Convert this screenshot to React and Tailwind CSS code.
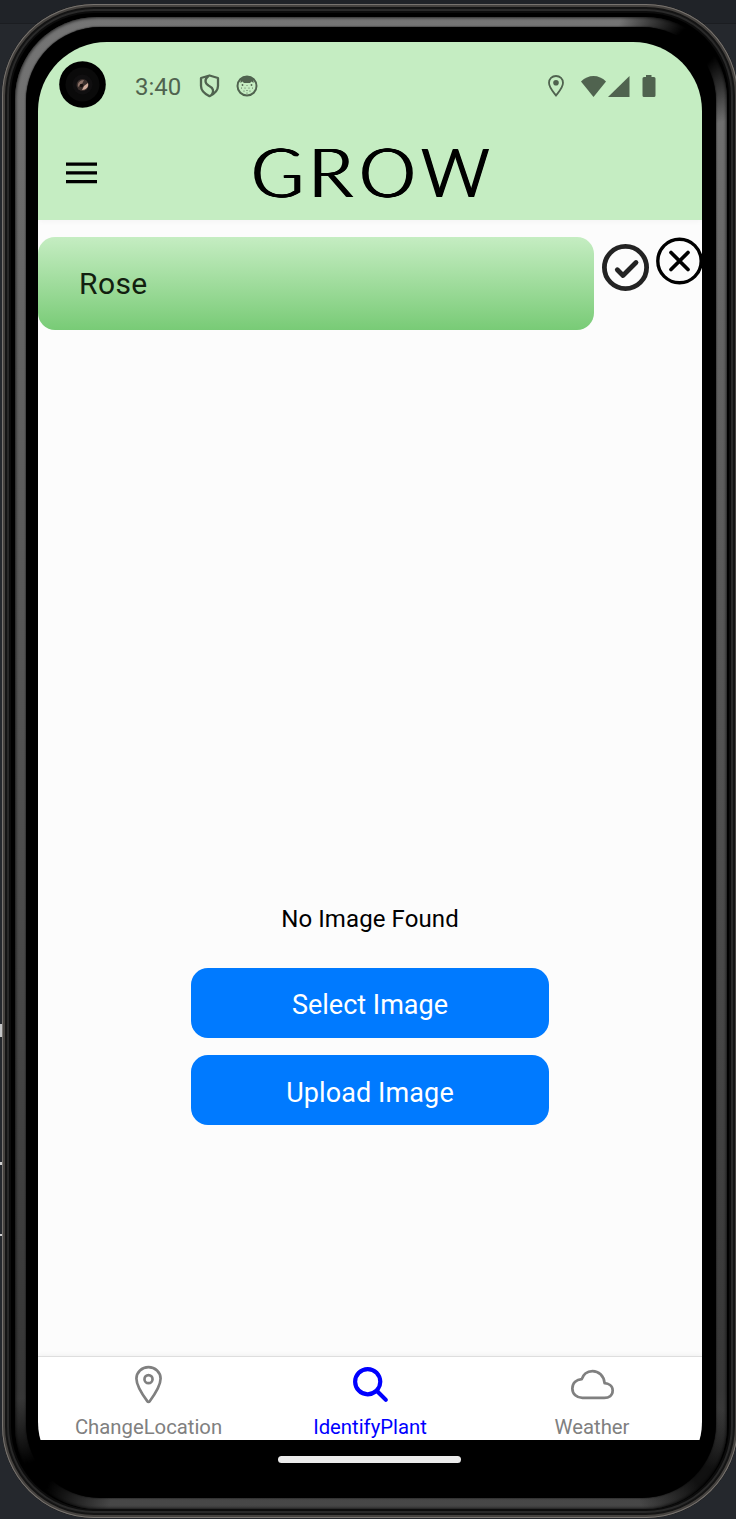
import React from "react";
import { IoLocationOutline, IoSearch, IoCloudOutline } from "react-icons/io5";

function Camera() {
  return (
    <svg className="absolute left-[21px] top-[19px]" width="47" height="47" viewBox="0 0 47 47">
      <circle cx="23.5" cy="23.5" r="23.3" fill="#000" />
      <circle cx="23.5" cy="23.5" r="17" fill="#0a0a0a" />
      <circle cx="23.5" cy="23.5" r="10" fill="#100f10" />
      <circle cx="23.5" cy="24" r="6" fill="#3a2f2c" />
      <path d="M19 26c-1-4 2-7 6-7l-2 4z" fill="#8b7167" />
      <path d="M29 22c1 4-2 7-6 7l2-4z" fill="#cfac9c" />
      <circle cx="22.5" cy="24.5" r="1.8" fill="#17100e" />
    </svg>
  );
}

function StatusBar() {
  return (
    <div className="flex h-[88px] items-center pl-[97px] pr-[46px] text-[#50634f]">
      <span className="w-[64px] pt-[2px] text-[24px] leading-none">3:40</span>
      <svg width="22" height="24" viewBox="0 0 22 24" fill="none" stroke="currentColor" strokeWidth="2.3" strokeLinejoin="round">
        <path d="M10.500 1.500 19 4V12c0 4.500-4 8-8.500 10.200C6 20 2 16.500 2 12V4Z" />
        <path d="M9.500 2C5.500 5 5.500 9 9.500 11.500 14.500 14 15 17 13 20.500" />
      </svg>
      <svg className="ml-[15px]" width="22" height="24" viewBox="0 0 22 24" fill="none">
        <circle cx="11" cy="12" r="9.500" stroke="currentColor" strokeWidth="2" />
        <path d="M4.500 4.500Q11 0 17.500 4.500V9l-2-1.500-1.500 1.500h-6L6.500 7.500 4.500 9Z" fill="currentColor" />
        <g fill="currentColor">
          <circle cx="6.500" cy="11" r=".9" /><circle cx="15.500" cy="11" r=".9" />
          <circle cx="5.500" cy="14" r=".6" /><circle cx="9" cy="14" r=".6" /><circle cx="13" cy="14" r=".6" />
          <circle cx="16.500" cy="14" r=".6" /><circle cx="8" cy="17" r=".6" /><circle cx="11" cy="16.500" r=".6" />
          <circle cx="14" cy="17" r=".6" /><circle cx="11" cy="11.500" r=".5" /><circle cx="11" cy="19" r=".6" />
        </g>
      </svg>
      <div className="grow" />
      <svg width="16" height="22" viewBox="0 0 16 22">
        <path d="M8 1C4 1 1 4 1 7.800 1 12.500 5 16.500 8 20.500c3-4 7-8 7-12.700C15 4 12 1 8 1Z" fill="none" stroke="currentColor" strokeWidth="1.800" />
        <circle cx="8" cy="7.700" r="2.800" fill="currentColor" />
      </svg>
      <svg className="ml-[17px]" width="25" height="21" viewBox="0 0 25 21" fill="currentColor">
        <path d="M0 5.500Q5.500 0 12.500 0T25 5.500L12.500 21Z" />
      </svg>
      <svg className="ml-[2px]" width="22" height="21" viewBox="0 0 22 21" fill="currentColor">
        <path d="M0 21 21.500 0V21Z" />
      </svg>
      <svg className="ml-[12px]" width="14" height="22" viewBox="0 0 14 22" fill="currentColor">
        <path d="M4 0h5.500v2H12q1.500 0 1.500 1.500V20.500q0 1.500-1.500 1.500H2Q.5 22 .5 20.500V3.500Q.5 2 2 2H4Z" />
      </svg>
    </div>
  );
}

function Header() {
  return (
    <header className="relative h-[178px] shrink-0 bg-[#c5edc2] shadow-[0_1px_6px_rgba(0,0,0,0.04)]">
      <StatusBar />
      <div className="flex h-[86px] items-center pl-[28px]">
        <svg width="31" height="22" viewBox="0 0 31 22" fill="#000">
          <path d="M0 .5h31v3.200H0zM0 9.300h31v3.200H0zM0 18h31v3.200H0z" />
        </svg>
        <h1 className="mb-[4px] ml-[153px] flex font-[Lato] text-[67px] font-light leading-none text-black [text-shadow:0.7px_0_0_#000,1.4px_0_0_#000,2px_0_0_#000,2.5px_0_0_#000]">
          <span className="mr-[8px] inline-block origin-left scale-x-[1.06]">G</span>
          <span className="mr-[10px] inline-block origin-left scale-x-[1.1]">R</span>
          <span className="mr-[9px] inline-block origin-left scale-x-[1.06]">O</span>
          <span className="inline-block">W</span>
        </h1>
      </div>
    </header>
  );
}

function PlantRow() {
  return (
    <div className="mt-[17px] flex h-[93px] items-start">
      <div className="flex h-[93px] w-[556px] shrink-0 items-center rounded-[17px] bg-linear-to-b from-[#c5edc2] to-[#78cb76] pl-[41px] text-[30px] tracking-[0.4px] text-[#12200f]">
        Rose
      </div>
      <svg className="ml-[8px] mt-[7px] shrink-0" width="47" height="47" viewBox="0 0 47 47" fill="none" stroke="#232323">
        <circle cx="23.500" cy="23.500" r="21.100" strokeWidth="4.800" />
        <path d="m15.300 25.700 5.700 5.800L34 18.500" strokeWidth="4.800" strokeLinecap="round" strokeLinejoin="round" />
      </svg>
      <svg className="ml-[7px] shrink-0" width="47" height="48" viewBox="0 0 47 48" fill="none" stroke="#000">
        <circle cx="23.500" cy="24" r="21.700" strokeWidth="3.400" />
        <path d="m15 15.500 17 17M32 15.500 15 32.500" strokeWidth="3.700" strokeLinecap="round" />
      </svg>
    </div>
  );
}

function Tab({ icon: Icon, label, active }) {
  return (
    <div className={`flex flex-col items-center pt-[6px] ${active ? "text-[#0000ff]" : "text-[#808080]"}`}>
      <Icon size={43} />
      <span className="mt-[9px] text-[20.3px] leading-[24px]">{label}</span>
    </div>
  );
}

export default function App() {
  return (
    <div className="relative h-[1519px] w-[736px] overflow-hidden bg-[#25282d] font-[Roboto,sans-serif]">
      <div className="absolute left-0 top-0 h-[24px] w-full border-b border-[#1b1d21] bg-[#202328]" />
      <div className="absolute left-0 top-[1024px] h-[13px] w-[2px] bg-[#c5c6c8]" />
      <div className="absolute left-0 top-[1162px] h-[3px] w-[2px] bg-[#d0d0d0]" />
      <div className="absolute left-0 top-[1234px] h-[2px] w-[2px] bg-[#d0d0d0]" />

      <div className="relative ml-[2px] mt-[4px] h-[1514px] w-[736px] rounded-[92px] bg-black p-[13px] pb-[9px] pr-[11px] shadow-[inset_0_0_0_1px_#77736f,inset_0_0_0_3px_#45423f,inset_0_0_0_5px_#141414,inset_0_0_0_7px_#292929,inset_0_0_0_9px_#0c0c0c]">
        <div className="h-full w-full rounded-[82px] bg-[radial-gradient(circle_at_680px_30px,#000_20px,transparent_80px),radial-gradient(circle_at_20px_1460px,#000_15px,transparent_80px),radial-gradient(circle_at_690px_1460px,#111_10px,transparent_70px),linear-gradient(to_bottom,#757575_0,#646464_20%,#484848_65%,#363636_92%,#484848_100%)] p-[11px] pt-[10px] shadow-[inset_0_0_3px_1px_rgba(0,0,0,0.65)]">
          <div className="h-full w-full rounded-[74px] bg-black px-[12px] pb-[10px] pt-[15px] shadow-[0_0_2px_#000]">
            <div className="relative flex h-[1448px] w-[664px] flex-col overflow-hidden rounded-b-[68px] rounded-t-[69px] bg-black">
              <Header />
              <Camera />
              <main className="flex grow flex-col bg-[#fcfcfc]">
                <PlantRow />
                <div className="mt-[573px] flex flex-col items-center">
                  <p className="h-[32px] text-[24px] leading-[32px] tracking-[0.1px] text-black">No Image Found</p>
                  <button className="mt-[33px] h-[70px] w-[358px] rounded-[17px] bg-[#007aff] pt-[4px] text-[27px] text-white">
                    Select Image
                  </button>
                  <button className="mt-[17.4px] h-[70px] w-[358px] rounded-[17px] bg-[#007aff] pt-[5.5px] text-[27px] tracking-[0.1px] text-white">
                    Upload Image
                  </button>
                </div>
              </main>
              <nav className="grid h-[84px] shrink-0 grid-cols-[221px_222px_222px] border-t border-[#dedede] bg-white shadow-[0_-1px_5px_rgba(0,0,0,0.05)]">
                <Tab icon={IoLocationOutline} label="ChangeLocation" />
                <Tab icon={IoSearch} label="IdentifyPlant" active />
                <Tab icon={IoCloudOutline} label="Weather" />
              </nav>
              <div className="z-10 flex h-[50px] shrink-0 justify-center bg-black pr-[2px] pt-[16px]">
                <div className="h-[7px] w-[183px] rounded-full bg-[#ebebeb]" />
              </div>
            </div>
          </div>
        </div>
      </div>
    </div>
  );
}
